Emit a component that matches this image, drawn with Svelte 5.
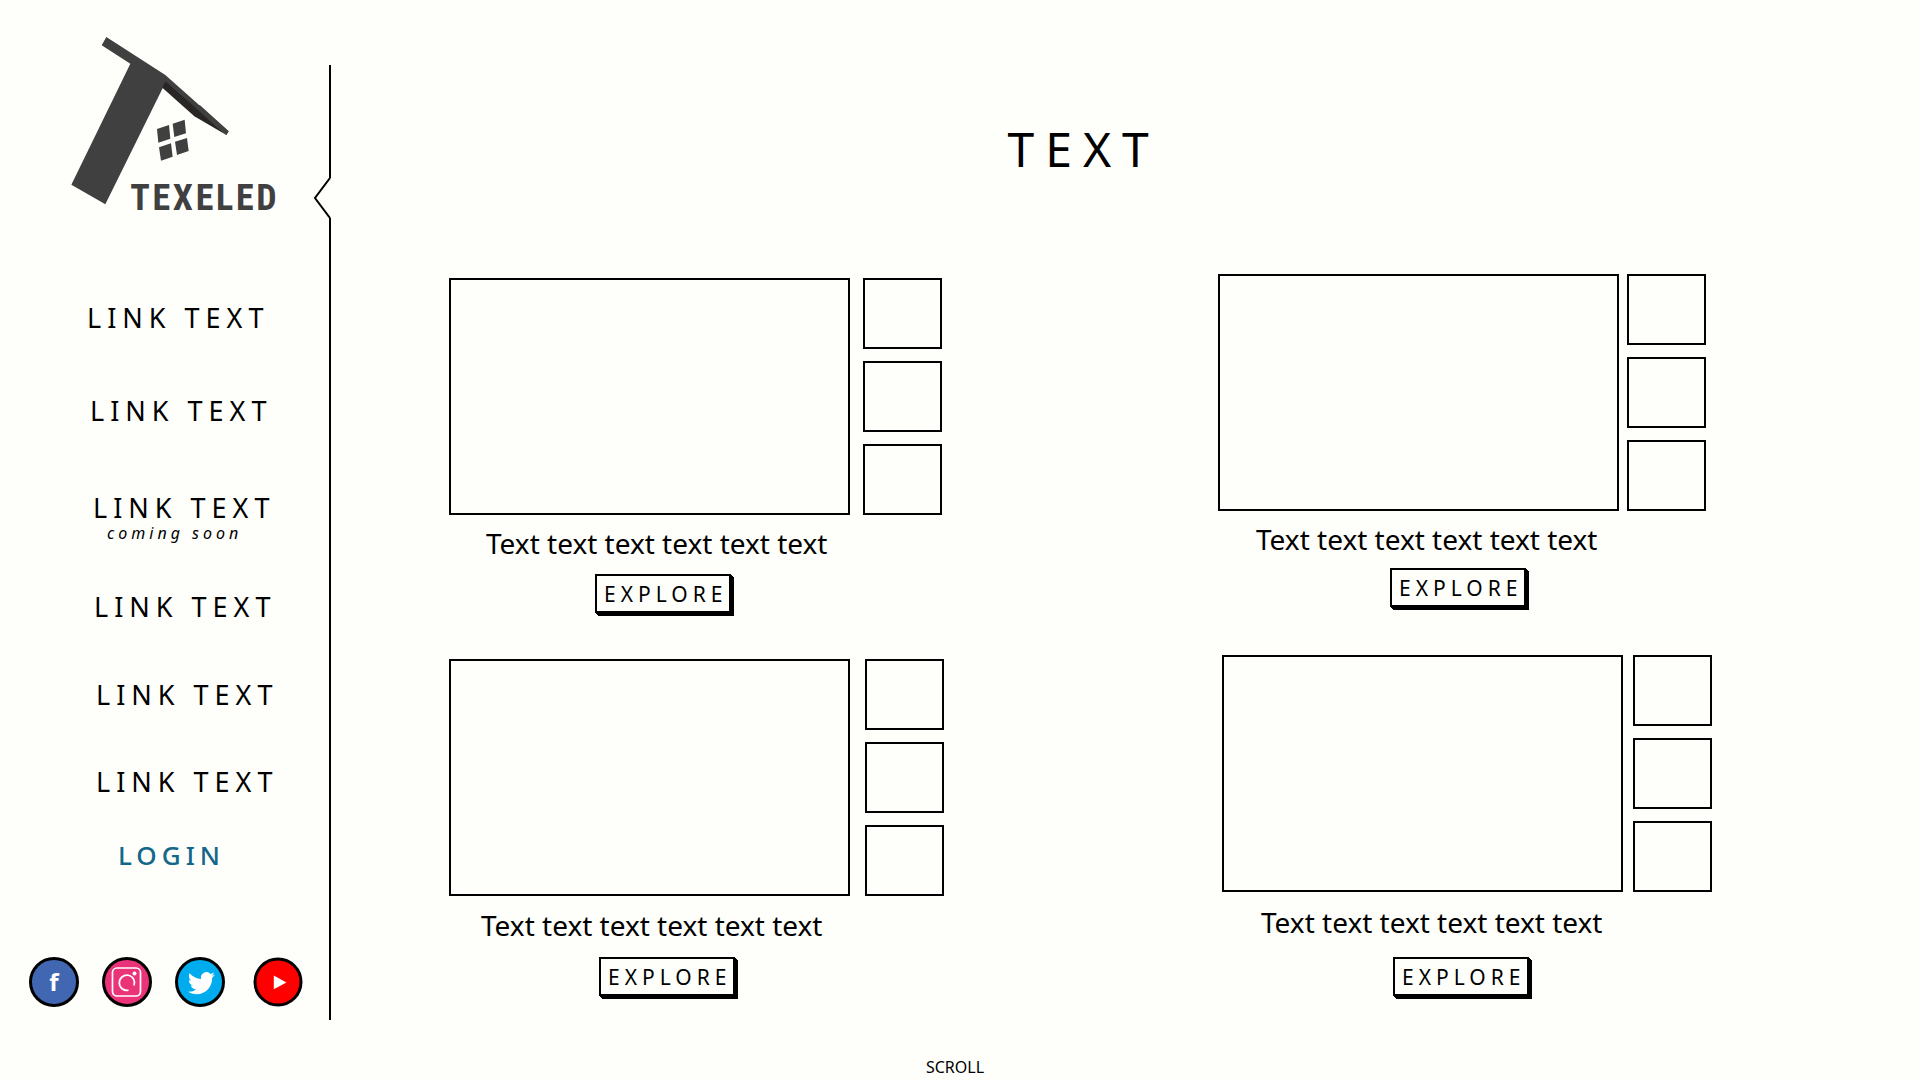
<script>
  const links = [
    { label: 'LINK TEXT' },
    { label: 'LINK TEXT' },
    { label: 'LINK TEXT', note: 'coming soon' },
    { label: 'LINK TEXT' },
    { label: 'LINK TEXT' },
    { label: 'LINK TEXT' }
  ];

  const cards = ['one', 'two', 'three', 'four'].map((name) => ({
    name,
    caption: 'Text text text text text text'
  }));
</script>

<div class="page">
  <aside class="sidebar">
    <div class="sidebar-content">
      <a class="logo" href="#home" aria-label="Texeled home">
        <svg viewBox="0 0 720 600" width="240" height="200" aria-hidden="true">
          <path fill="#404040" d="M199 51 L376 165 L566 334 L559 345 L376 188 L196 553 L94 494 L271 131 L185 76 Z" />
          <path fill="#2a2625" d="M376 184 L462 259 L559 345 L463 289 L367 203 Z" />
          <path fill="#404040" d="M462 259 L480 256 L566 334 L559 345 Z" />
          <path fill="#404040" d="M351 327 L387 315 L391 356 L355 368 Z M398 311 L434 299 L438 340 L403 351 Z M357 382 L393 370 L398 410 L363 422 Z M405 365 L441 354 L446 393 L411 405 Z" />
          <text class="wordmark" x="271" y="570">TEXELED</text>
        </svg>
      </a>

      <nav aria-label="Main">
        <ul class="links">
          {#each links as link}
            <li>
              <a href="#link">{link.label}</a>
              {#if link.note}<span class="note">{link.note}</span>{/if}
            </li>
          {/each}
        </ul>
        <a class="login" href="#login">LOGIN</a>
      </nav>

      <div class="socials">
        <a href="#facebook" aria-label="Facebook">
          <svg viewBox="0 0 50 50" width="50" height="50">
            <circle cx="25" cy="25" r="23.5" fill="#4267b2" />
            <text class="fb" x="25" y="34" text-anchor="middle">f</text>
          </svg>
        </a>
        <a href="#instagram" aria-label="Instagram">
          <svg viewBox="0 0 50 50" width="50" height="50">
            <circle cx="25" cy="25" r="23.5" fill="#ea3378" />
            <g class="line-art">
              <rect x="10.5" y="11" width="28" height="28" rx="4.5" />
              <path d="M32 28.5 A7.6 7.6 0 1 0 26.5 33.2" />
            </g>
            <circle class="dot" cx="32.5" cy="16.5" r="2" />
          </svg>
        </a>
        <a href="#twitter" aria-label="Twitter">
          <svg viewBox="0 0 50 50" width="50" height="50">
            <circle cx="25" cy="25" r="23.5" fill="#00acee" />
            <path class="solid" transform="translate(12.8 12.6) scale(1.13)" d="M23.953 4.57a10 10 0 01-2.825.775 4.958 4.958 0 002.163-2.723c-.951.555-2.005.959-3.127 1.184a4.92 4.92 0 00-8.384 4.482C7.69 8.095 4.067 6.13 1.64 3.162a4.822 4.822 0 00-.666 2.475c0 1.71.87 3.213 2.188 4.096a4.904 4.904 0 01-2.228-.616v.06a4.923 4.923 0 003.946 4.827 4.996 4.996 0 01-2.212.085 4.936 4.936 0 004.604 3.417 9.867 9.867 0 01-6.102 2.105c-.39 0-.779-.023-1.17-.067a13.995 13.995 0 007.557 2.209c9.053 0 13.998-7.496 13.998-13.985 0-.21 0-.42-.015-.63A9.935 9.935 0 0024 4.59z" />
          </svg>
        </a>
        <a href="#youtube" aria-label="YouTube">
          <svg viewBox="0 0 50 50" width="50" height="50">
            <circle cx="25" cy="25" r="23" fill="#ff0000" />
            <path class="solid" d="M20.8 18.6 L33.4 25.4 L20.8 32.2 Z" />
          </svg>
        </a>
      </div>
    </div>

    <div class="divider" aria-hidden="true">
      <span class="rule top"></span>
      <svg viewBox="0 0 18 40" width="18" height="40">
        <path d="M17 0 L2 20 L17 40" />
      </svg>
      <span class="rule bottom"></span>
    </div>
  </aside>

  <main>
    <h1>TEXT</h1>
    <div class="cards">
      {#each cards as card}
        <article class="card {card.name}">
          <div class="gallery">
            <div class="frame"></div>
            <div class="thumbs">
              <div class="thumb"></div>
              <div class="thumb"></div>
              <div class="thumb"></div>
            </div>
          </div>
          <p>{card.caption}</p>
          <button type="button">EXPLORE</button>
        </article>
      {/each}
    </div>
  </main>

  <footer><a href="#more">SCROLL</a></footer>
</div>

<style>
  :global(body) {
    margin: 0;
    background: #fefffb;
  }

  .page {
    box-sizing: border-box;
    display: grid;
    grid-template-columns: 331px minmax(0, 1fr);
    grid-template-rows: 1fr auto;
    min-height: 100vh;
    color: #000;
    font-family: 'Noto Sans', 'Open Sans', sans-serif;
  }

  a {
    color: inherit;
    text-decoration: none;
  }

  svg {
    display: block;
  }

  .sidebar {
    display: flex;
    justify-content: space-between;
  }

  .sidebar-content {
    width: 313px;
    padding-top: 20px;
  }

  .logo {
    display: block;
    width: 240px;
    margin-left: 40px;
  }

  .wordmark {
    font-family: 'Liberation Sans Narrow', 'Roboto Condensed', 'Noto Sans', sans-serif;
    font-size: 108px;
    font-weight: 700;
    letter-spacing: 8px;
    fill: #404040;
  }

  .links {
    margin: 80px 0 0;
    padding: 0;
    list-style: none;
  }

  .links li {
    margin: 0 0 51px 96px;
  }

  .links li:nth-child(1) {
    margin: 0 0 57px 87px;
  }

  .links li:nth-child(2) {
    margin: 0 0 61px 90px;
  }

  .links li:nth-child(3) {
    margin: 0 0 49px 93px;
  }

  .links li:nth-child(4) {
    margin: 0 0 52px 94px;
  }

  .links li:last-child {
    margin-bottom: 37px;
  }

  .links a,
  .login {
    display: block;
    font-size: 27px;
    line-height: 36px;
    letter-spacing: 6px;
    white-space: nowrap;
  }

  .note {
    display: block;
    margin-left: 14px;
    font-size: 16px;
    font-style: italic;
    line-height: 14px;
    letter-spacing: 4px;
    white-space: nowrap;
  }

  .login {
    margin-left: 118px;
    color: #13678a;
    font-size: 26px;
    font-weight: 500;
    letter-spacing: 5px;
  }

  .socials {
    display: flex;
    gap: 23px;
    margin: 84px 0 0 29px;
  }

  .socials a:last-child {
    margin-left: 5px;
  }

  .socials svg > circle:first-child {
    stroke: #000;
    stroke-width: 3;
  }

  .fb {
    fill: #fff;
    font-size: 24px;
    font-weight: 700;
  }

  .line-art {
    fill: none;
    stroke: #fff;
    stroke-width: 1.7;
  }

  .dot,
  .solid {
    fill: #fff;
  }

  .divider {
    display: flex;
    flex-direction: column;
    align-items: flex-end;
    width: 18px;
    padding: 65px 0 35px;
  }

  .divider path {
    fill: none;
    stroke: #000;
    stroke-width: 2;
  }

  .rule {
    width: 2px;
    background: #000;
  }

  .rule.top {
    height: 113px;
  }

  .rule.bottom {
    flex: 1;
  }

  h1 {
    margin: 0;
    padding: 116px 0 92px calc(50% - 118px);
    font-size: 48px;
    font-weight: 400;
    line-height: 66px;
    letter-spacing: 11px;
  }

  .cards {
    display: grid;
    grid-template-columns: repeat(2, minmax(0, 1fr));
    grid-auto-rows: minmax(381px, auto);
    column-gap: 274px;
    padding: 0 207px 0 118px;
  }

  .card {
    --gap: 13px;
    --indent: 37px;
    --button-indent: 146px;
    --button-space: 12px;
    --caption-space: 9px;
  }

  .one {
    padding: 4px 2px 0 0;
  }

  .two {
    --gap: 8px;
    --indent: 38px;
    --button-indent: 172px;
    --button-space: 10px;
    padding-right: 7px;
  }

  .three {
    --gap: 15px;
    --indent: 32px;
    --button-indent: 150px;
    --button-space: 13px;
    --caption-space: 10px;
    padding-top: 4px;
  }

  .four {
    --gap: 10px;
    --indent: 39px;
    --button-indent: 171px;
    --button-space: 16px;
    --caption-space: 11px;
    padding: 0 1px 0 4px;
  }

  .gallery {
    display: flex;
    gap: var(--gap);
  }

  .frame {
    flex: 1;
    border: 2px solid #000;
  }

  .thumbs {
    display: grid;
    gap: 12px;
    width: 79px;
  }

  .thumb {
    box-sizing: border-box;
    height: 71px;
    border: 2px solid #000;
  }

  p {
    margin: var(--caption-space) 0 var(--button-space) var(--indent);
    font-size: 28px;
    line-height: 38px;
    white-space: nowrap;
  }

  button {
    display: block;
    box-sizing: border-box;
    min-width: 136px;
    height: 39px;
    margin-left: var(--button-indent);
    padding: 0 0 0 7px;
    border: 2px solid #000;
    background: #fefffb;
    box-shadow: 1px 1px #000, 2px 2px #000, 3px 3px #000;
    color: #000;
    font-family: inherit;
    font-size: 21px;
    letter-spacing: 5px;
    text-align: left;
    cursor: pointer;
  }

  footer {
    grid-column: 1 / -1;
    padding-right: 10px;
    font-size: 16px;
    line-height: 25px;
    text-align: center;
  }

  @media (max-width: 1500px) {
    .cards {
      column-gap: 60px;
      padding: 0 40px;
    }
  }
</style>
